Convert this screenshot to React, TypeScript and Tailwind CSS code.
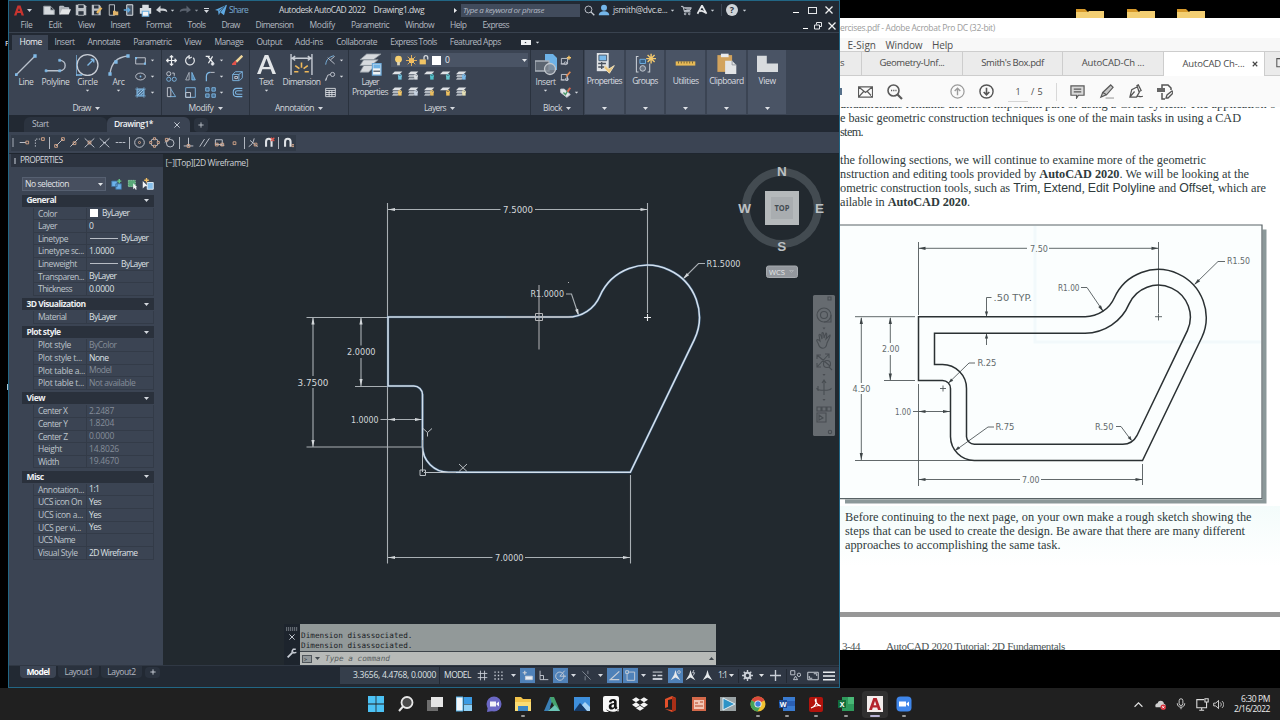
/**
 * CAD workstation desktop
 *
 * A dark CAD window on the left, a PDF reader with the exercise sheet
 * on the right and the system taskbar along the bottom.
 */

import { useLayoutEffect, useRef, useState, type ReactNode } from 'react'
import { FaDropbox, FaAmazon } from 'react-icons/fa'

/**
 * Utility function for conditional CSS classes
 */
function classNames(...classes: (string | false | undefined)[]) {
  return classes.filter(Boolean).join(' ')
}

/**
 * Single line of text tracked so that it fills exactly `w` pixels
 */
function Fit({ w, className, children }: { w: number; className?: string; children: ReactNode }) {
  const ref = useRef<HTMLSpanElement>(null)
  const [spacing, setSpacing] = useState(0)

  useLayoutEffect(() => {
    const el = ref.current
    if (!el) return
    const count = el.textContent?.length || 1
    setSpacing((w - el.getBoundingClientRect().width) / count)
  }, [w])

  return (
    <span className={classNames('block shrink-0 whitespace-nowrap', className)} style={{ width: w }}>
      <span ref={ref} className="inline-block whitespace-nowrap" style={{ letterSpacing: spacing }}>
        {children}
      </span>
    </span>
  )
}

/**
 * Small inline icon on a 16 unit grid
 */
function Icon({ size = 12, box = '0 0 16 16', className, children }: { size?: number; box?: string; className?: string; children: ReactNode }) {
  return (
    <svg width={size} height={size} viewBox={box} fill="none" stroke="#c9ced6" strokeWidth="1.3" className={classNames('block shrink-0', className)} aria-hidden="true">
      {children}
    </svg>
  )
}

function Caret({ className }: { className?: string }) {
  return (
    <svg width="5" height="3" viewBox="0 0 10 6" className={classNames('block shrink-0', className || 'text-[#d5d9df]')} aria-hidden="true">
      <path d="M0 0H10L5 6Z" fill="currentColor" />
    </svg>
  )
}

const BLUE = '#7fb9e6'

/* ------------------------------------------------------------------ */
/* Title bar and menus                                                 */
/* ------------------------------------------------------------------ */

function TitleBar() {
  return (
    <div className="flex h-[18px] shrink-0 items-center">
      <svg width="10" height="11" viewBox="0 0 20 22" className="ml-[5px] block shrink-0" aria-hidden="true">
        <path d="M7 1h6l7 20h-5l-1.500-5H6.500L5 21H0ZM10 6l-2 6h4Z" fill="#c8342f" fillRule="evenodd" />
      </svg>
      <Caret className="ml-[3px] text-[#c9ced6]" />
      <Icon className="ml-[11px]"><path d="M1 3h9l5 5v6H1Z M10 3v5h5" fill="#d6dade" stroke="#9aa0a8" /></Icon>
      <Icon className="ml-1"><path d="M1 14V3h5l2 2h5v3" fill="#a9adb2" /><path d="M1 14l3-7h12l-3 7Z" fill="#e3e5e7" stroke="none" /></Icon>
      <Icon className="ml-1"><path d="M1 1h12l2 2v12H1Z" fill="#b9bec4" stroke="none" /><path d="M4 1h8v5H4ZM4 9h8v6H4Z" fill="#2c3440" stroke="#e9ebed" strokeWidth=".8" /></Icon>
      <Icon className="ml-1"><path d="M1 1h10l2 2v12H1Z" fill="#b9bec4" stroke="none" /><path d="M4 2h6v4H4ZM4 9h6v5H4Z" fill="#2c3440" stroke="none" /><path d="M8 12l6-7" stroke="#e9b860" strokeWidth="3" /></Icon>
      <Icon className="ml-1"><path d="M3 1h7v14H3Z" stroke="#b9bec4" /><path d="M8 9h3l1 1h3v5H8Z" fill="#e0b46a" stroke="none" /></Icon>
      <Icon className="ml-1"><path d="M5 1h8v14H5Z" stroke="#dfe2e5" fill="#4c5968" /><path d="M1 8h8M6 5l3 3-3 3" stroke="#5fa8dd" strokeWidth="1.800" /></Icon>
      <Icon className="ml-1" size={13}><path d="M4 1h8v4H4ZM1 5h14v7H1Z" fill="#d9dde1" stroke="none" /><path d="M4 9h8v6H4Z" fill="#f4f5f6" stroke="#67aee0" /></Icon>
      <Icon className="ml-[4px]"><path d="M15 11c0-5-4-5-9-5V2L0 8l6 4V9c5 0 7 0 9 2Z" fill="#cfd3d8" stroke="none" /></Icon>
      <Caret className="ml-[2px] scale-75 text-[#c9ced6]" />
      <Icon className="ml-[4px]"><path d="M1 11c0-5 4-5 9-5V2l6 6-6 4V9c-5 0-7 0-9 2Z" fill="#59616d" stroke="none" /></Icon>
      <Caret className="ml-[3px] scale-75 text-[#8a919b]" />
      <span className="ml-[5px] flex shrink-0 flex-col items-center gap-px"><span className="h-px w-[5px] bg-[#d5d9df]" /><Caret /></span>
      <Icon className="ml-[6px]"><path d="M0 8L16 1l-4 14-5-4-2 4-1-6Z" fill="#5fa9e2" stroke="none" /><path d="M5 9l8-6-6 8" stroke="#222933" strokeWidth=".8" /></Icon>
      <Fit w={19} className="ml-[2px] text-[#79a9cf]">Share</Fit>
      <Fit w={86.5} className="ml-[31px] text-[#d6d9dd]">Autodesk AutoCAD 2022</Fit>
      <Fit w={50.5} className="ml-2 text-[#d6d9dd]">Drawing1.dwg</Fit>
      <svg width="3" height="5" viewBox="0 0 3 5" className="ml-[30px] block shrink-0"><path d="M0 0L3 2.500 0 5Z" fill="#e8eaed" /></svg>
      <div className="ml-[4px] flex h-[13px] w-[119px] shrink-0 items-center bg-[#414b5c] pl-[2px]">
        <Fit w={81} className="text-[8px] italic text-[#b4bac4]">Type a keyword or phrase</Fit>
      </div>
      <Icon className="ml-[4px]" size={11}><circle cx="6.500" cy="6.500" r="5" /><path d="M10 10l5 5" strokeWidth="2" /></Icon>
      <Icon className="ml-[3px]"><circle cx="8" cy="5" r="4" fill="#74b6ea" stroke="none" /><path d="M1 15c0-7 14-7 14 0Z" fill="#74b6ea" stroke="none" /></Icon>
      <Fit w={54.5} className="ml-[3px] text-[#d6d9dd]">jsmith@dvc.e...</Fit>
      <Caret className="ml-[2px] scale-75 text-[#c9ced6]" />
      <Icon className="ml-[6.500px]" size={11}><path d="M0 2h3l2 8h9M4 4h11l-2 4H5" fill="#8f959d" /><circle cx="6" cy="13" r="1.200" /><circle cx="12" cy="13" r="1.200" /></Icon>
      <Icon className="ml-[4px]"><path d="M8 2L2 13M8 2l6 11M5 10c3-3 6 2 9 2" strokeWidth="2.200" stroke="#e5e7ea" /></Icon>
      <Caret className="ml-[2px] scale-75 text-[#c9ced6]" />
      <span className="ml-[6px] h-[12px] w-px shrink-0 bg-[#3b4450]" />
      <span className="ml-[4px] flex size-[12px] shrink-0 items-center justify-center rounded-full bg-[#d0d4d8] text-[9px] font-bold text-[#2b323c]">?</span>
      <Caret className="ml-[4px] scale-75 text-[#c9ced6]" />
      <span className="ml-[46px] mt-[5px] h-px w-[6px] shrink-0 bg-white" />
      <span className="ml-[9px] h-[7px] w-[9px] shrink-0 border border-[#e5e7ea]" />
      <Icon className="ml-[8px]" size={8}><path d="M1 1l14 14M15 1L1 15" strokeWidth="2.500" stroke="#f2f3f4" /></Icon>
    </div>
  )
}

const menus: [string, number][] = [
  ['File', 12], ['Edit', 13.5], ['View', 16.5], ['Insert', 19.5], ['Format', 25.5], ['Tools', 18], ['Draw', 18],
  ['Dimension', 38], ['Modify', 25.5], ['Parametric', 38], ['Window', 29], ['Help', 16.5], ['Express', 26.5],
]

const ribbonTabs: [string, number][] = [
  ['Insert', 20], ['Annotate', 32.5], ['Parametric', 38], ['View', 17], ['Manage', 29], ['Output', 25.500],
  ['Add-ins', 28], ['Collaborate', 41], ['Express Tools', 46.5], ['Featured Apps', 51],
]

function MenuBar() {
  return (
    <div className="flex h-[14px] shrink-0 items-center gap-4 border-b border-[#39424f] pl-[11.500px] text-[#b4b9c1]">
      {menus.map(([name, w]) => (
        <Fit key={name} w={w}>{name}</Fit>
      ))}
      <div className="ml-auto flex items-center gap-[6px] pr-[3px]">
        <span className="mt-[5px] h-px w-[5px] bg-white" />
        <Icon size={8}><path d="M5 5V1h10v8h-4M1 6h10v8H1Z" strokeWidth="2" stroke="#e5e7ea" /></Icon>
        <Icon size={8}><path d="M1 1l14 14M15 1L1 15" strokeWidth="2.500" stroke="#f2f3f4" /></Icon>
      </div>
    </div>
  )
}

function RibbonTabs() {
  return (
    <div className="flex h-[17px] shrink-0 items-end text-[#b4b9c1]">
      <div className="ml-[3px] flex h-[15px] w-[36px] shrink-0 items-center bg-[#3b4453] pl-[7.500px] text-[#f0f2f4]">
        <Fit w={22.5}>Home</Fit>
      </div>
      <div className="ml-[6.500px] flex h-[15px] items-center gap-[13.100px]">
        {ribbonTabs.map(([name, w]) => (
          <Fit key={name} w={w}>{name}</Fit>
        ))}
        <div className="ml-[7px] flex items-center gap-[4px]">
          <span className="flex h-[5px] w-[10px] items-center justify-center bg-[#eef0f2]"><Caret className="rotate-180 scale-50 text-[#222933]" /></span>
          <Caret className="scale-75 text-[#d5d9df]" />
        </div>
      </div>
    </div>
  )
}

/* ------------------------------------------------------------------ */
/* Ribbon                                                              */
/* ------------------------------------------------------------------ */

function BigButton({ label, w, cell, caret, children }: { label: string; w: number; cell: string; caret?: boolean; children: ReactNode }) {
  return (
    <div className={classNames('flex shrink-0 flex-col items-center', cell)}>
      <div className="mt-[3px] flex h-[23px] items-center">{children}</div>
      <Fit w={w} className="h-[12px] leading-[12px] text-[#d3d7dc]">{label}</Fit>
      {caret && <Caret className="mt-px scale-75 text-[#d5d9df]" />}
    </div>
  )
}

function Panel({ title, w, cell, children }: { title: string; w: number; cell: string; children: ReactNode }) {
  return (
    <div className={classNames('flex shrink-0 flex-col border-r border-[#2a323e]', cell)}>
      <div className="flex h-[51px]">{children}</div>
      <div className="flex h-[14px] items-center justify-center gap-[4px] text-[#d3d7dc]">
        <Fit w={w}>{title}</Fit>
        <Caret />
      </div>
    </div>
  )
}

const drawTools: ReactNode[] = [
  <><path d="M1 4h14v9H1Z" /><path d="M0 3h3v3H0ZM13 11h3v3h-3Z" fill={BLUE} stroke="none" /></>,
  <><ellipse cx="8" cy="8" rx="7" ry="5" /><circle cx="8" cy="8" r="1.300" fill={BLUE} stroke="none" /></>,
  <><path d="M3 3h10v10H3Z" stroke={BLUE} fill="#4d7599" /><path d="M3 0v16M13 0v16M0 3h16M0 13h16" stroke={BLUE} strokeWidth=".8" /><path d="M4 8l4-4M4 12l8-8M8 12l4-4" stroke="#a5cdea" /></>,
]

const modifyTools: ReactNode[][] = [
  [
    <path d="M8 1v14M1 8h14M5.500 3.500L8 1l2.500 2.500M5.500 12.500L8 15l2.500-2.500M3.500 5.500L1 8l2.500 2.500M12.500 5.500L15 8l-2.500 2.500" stroke="#eceef0" strokeWidth="1.700" />,
    <path d="M6 2a6.300 6.300 0 1 0 6 2M6 0l0 5 4-2" stroke="#dfe2e6" strokeWidth="1.800" />,
    <><path d="M1 2h6M4 2l5 6 4 5M11 2L5 12" stroke="#eceef0" strokeWidth="1.800" /><circle cx="11" cy="13" r="2" fill="#eceef0" /></>,
    <><path d="M15 1L6 10" stroke="#f0d79b" strokeWidth="3.500" /><path d="M6 9l-4 4h4" stroke="#e0524a" strokeWidth="3" /></>,
  ],
  [
    <><circle cx="4" cy="4" r="3" /><circle cx="4" cy="12" r="3" stroke={BLUE} /><circle cx="12" cy="12" r="3" stroke={BLUE} /><path d="M9 3h3v4" /></>,
    <><path d="M6 2v11H1Z" stroke="#aeb6c0" /><path d="M10 2v11h5Z" stroke={BLUE} fill="#4f86b0" /></>,
    <><path d="M2 15V8c0-4 2-6 6-6" stroke={BLUE} strokeWidth="1.800" /><path d="M8 2h6" /></>,
    <><path d="M1 5h9v9H1ZM5 1h10v9l-4 4M1 5l4-4M10 5l5-4" stroke={BLUE} /><path d="M4 8h4v3H4Z" /></>,
  ],
  [
    <><path d="M2 1h5v13H2Z" /><path d="M7 3l7 11H6" stroke={BLUE} /></>,
    <><path d="M1 1h14v14H1Z" stroke={BLUE} /><path d="M1 8h7v7H1Z" /></>,
    <><path d="M1 1h5v5H1ZM10 1h5v5h-5ZM1 10h5v5H1ZM10 10h5v5h-5Z" stroke={BLUE} fill="#456a8c" /></>,
    <><path d="M15 2H7C0 2 0 14 7 14h8M15 5.500H8c-4 0-4 5 0 5h7" stroke={BLUE} strokeWidth="1.500" /></>,
  ],
]

const annotationTools: ReactNode[] = [
  <><path d="M1 14C2 6 6 3 13 1" stroke={BLUE} /><path d="M4 4l10 9M14 2L8 7" /></>,
  <><circle cx="11" cy="5" r="3" /><path d="M1 14l3-8 4-1M1 14l1-4" /></>,
  <><path d="M1 2h14v12H1ZM1 5h14M1 8h14M1 11h14M6 5v9M10 5v9" stroke="#dadde2" /></>,
]

const blockTools: ReactNode[] = [
  <><path d="M2 5h9v8H2ZM1 13h5" /><circle cx="8" cy="12" r="2" /><path d="M13 1v6M10 4h6" stroke="#f1c26a" strokeWidth="2" /></>,
  <><path d="M2 5h9v8H2ZM1 13h5" /><circle cx="10" cy="12" r="2" /><path d="M15 1L9 8" stroke="#e58a52" strokeWidth="2.500" /></>,
  <><path d="M1 3h5l9 8-5 4-9-7Z" fill="#e3e5e8" /><path d="M5 8l3 3 5-9" stroke="#4c9a6a" strokeWidth="2" /><path d="M15 1l-4 6" stroke="#e0644d" strokeWidth="2.500" /></>,
]

// Stack-of-sheets glyph with a coloured badge, reused for all layer tools
function LayerGlyph({ badge, stack }: { badge: string; stack?: boolean }) {
  return (
    <>
      <path d="M4 2h11l-4 4H0Z" fill="#dfe2e6" stroke="none" />
      {stack && <path d="M2 7h11l-3 3H0ZM2 11h9l-3 3H0Z" fill="#b3b9c1" stroke="none" />}
      <path d="M9 8h5v6H9Z" fill={badge} stroke="none" />
      <circle cx="11.500" cy="8.500" r="2.300" stroke={badge} />
    </>
  )
}

const layerRows: { badge: string; stack?: boolean }[][] = [
  [{ badge: '#6fc3de' }, { badge: '#d9dde1', stack: true }, { badge: '#4fc0c9' }, { badge: '#65c4cc' }, { badge: '#79b9e8', stack: true }],
  [{ badge: '#f2c665', stack: true }, { badge: '#c8d4e3', stack: true }, { badge: '#e9bd61', stack: true }, { badge: '#efc15f' }, { badge: '#e5dfb5', stack: true }],
]

const collapsedPanels: { name: string; w: number; icon: ReactNode }[] = [
  {
    name: 'Properties', w: 35,
    icon: <><path d="M4 0h17v26H4Z" fill="#dfe2e5" stroke="none" /><path d="M7 3h11v8H7Z" fill="#79b9ea" stroke="#46566a" /><path d="M6 15h11M6 20h9M11 13v10" stroke="#48505c" strokeWidth="1.800" /><path d="M16 18l5 5 8-5-7 11-7-7Z" fill="#e9c478" stroke="#f3e3bd" /></>,
  },
  {
    name: 'Groups', w: 25.5,
    icon: <><path d="M5 5H2v22h3M19 5M18 27h3V15" stroke="#c8cdd4" strokeWidth="1.500" /><path d="M7 9h8v6H7Z" stroke="#6fb1e5" fill="#385f83" /><circle cx="11" cy="22" r="4" fill="#697382" /><path d="M23 1v14M16 8h14M18 3l10 10M28 3L18 13" stroke="#f3c96e" strokeWidth="2" /></>,
  },
  {
    name: 'Utilities', w: 26,
    icon: <><path d="M1 12h28v6H1Z" fill="#e8ba55" stroke="none" /><path d="M5 12v3M9 12v3M13 12v3M17 12v3M21 12v3M25 12v3" stroke="#6b5a32" /></>,
  },
  {
    name: 'Clipboard', w: 34.5,
    icon: <><path d="M2 3h21v24H2Z" fill="#d2a35d" stroke="none" /><path d="M7 1h11v5H7Z" fill="#e9ebed" stroke="none" /><path d="M13 11h10l6 6v13H13Z" fill="#e3e5e7" stroke="none" /><path d="M23 11v6h6" stroke="#8d939b" /></>,
  },
  {
    name: 'View', w: 17,
    icon: <path d="M0 4h14v11h16v12H0Z" fill="#d8dbde" stroke="none" />,
  },
]

function Ribbon() {
  return (
    <div className="flex h-[65px] shrink-0 bg-[#3b4453] pl-[2px]">
      <Panel title="Draw" w={18} cell="w-[151px]">
        <BigButton label="Line" w={15} cell="w-[30px]">
          <Icon size={22} box="0 0 22 22"><path d="M1 21L20 2" stroke="#b9c1cc" /><path d="M0 20h2v2H0ZM19 1h2v2h-2Z" fill={BLUE} stroke={BLUE} /></Icon>
        </BigButton>
        <BigButton label="Polyline" w={28} cell="w-[29px]">
          <Icon size={23} box="0 0 22 22"><path d="M2 17H15c7 0 7-10 0-10" stroke="#b9c1cc" /><path d="M1 16h2v2H1ZM14 16h2v2h-2ZM14 6h2v2h-2Z" fill={BLUE} stroke={BLUE} strokeWidth=".6" /></Icon>
        </BigButton>
        <BigButton label="Circle" w={20.5} cell="w-[35px]" caret>
          <Icon size={23} box="0 0 22 22"><circle cx="11" cy="11.500" r="10" stroke="#c9ced6" /><path d="M11 12l6-6M17 6h-3M17 6v3M0 2v20M0 21h6" stroke={BLUE} /></Icon>
        </BigButton>
        <BigButton label="Arc" w={12} cell="w-[27px]" caret>
          <Icon size={22} box="0 0 22 22"><path d="M2 20C3 10 9 3 20 2" stroke="#b9c1cc" /><path d="M1 19h2v2H1ZM7 7h2v2H7ZM19 1h2v2h-2Z" fill={BLUE} stroke={BLUE} /></Icon>
        </BigButton>
        <div className="flex flex-col pl-[3px] pt-[2px]">
          {drawTools.map((tool, i) => (
            <div key={i} className="flex h-4 items-center gap-[4px]"><Icon size={11}>{tool}</Icon><Caret className="scale-75 text-[#d5d9df]" /></div>
          ))}
        </div>
      </Panel>

      <Panel title="Modify" w={25} cell="w-[88px]">
        <div className="flex flex-col pl-[4px] pt-[2px]">
          {modifyTools.map((row, r) => (
            <div key={r} className="flex h-4 items-center">
              <Icon size={11}>{row[0]}</Icon>
              <Icon size={11} className="ml-2">{row[1]}</Icon>
              <Icon size={11} className="ml-[9px]">{row[2]}</Icon>
              <Caret className="ml-[3px] scale-75 text-[#d5d9df]" />
              <Icon size={11} className="ml-2">{row[3]}</Icon>
            </div>
          ))}
        </div>
      </Panel>

      <Panel title="Annotation" w={39} cell="w-[99px]">
        <BigButton label="Text" w={14} cell="w-[32px]" caret>
          <Icon size={19}><path d="M0 16L6.500 0h3L16 16h-3l-1.500-4h-7L3 16ZM8 3l-2.700 7h5.400Z" fill="#e2e5e8" stroke="none" fillRule="evenodd" /></Icon>
        </BigButton>
        <BigButton label="Dimension" w={38} cell="w-[39px]">
          <Icon size={23} box="0 0 22 22"><path d="M1 1v20M21 1v20M2 5h18M5 3L2 5l3 2M17 3l3 2-3 2" stroke="#c9ced6" /><path d="M11 9v5M5 12l4 3M17 12l-4 3M4 18h4M18 18h-4" stroke="#f0b95a" strokeWidth="1.500" /></Icon>
        </BigButton>
        <div className="flex flex-col pl-[4px] pt-[2px]">
          {annotationTools.map((tool, i) => (
            <div key={i} className="flex h-4 items-center gap-[3px]"><Icon size={11}>{tool}</Icon>{i < 2 && <Caret className="scale-75 text-[#d5d9df]" />}</div>
          ))}
        </div>
      </Panel>

      <Panel title="Layers" w={22} cell="w-[182px]">
        <div className="flex w-[42px] shrink-0 flex-col items-center leading-[10px] text-[#d3d7dc]">
          <Icon size={23} box="0 0 24 24" className="mt-[3px]"><path d="M8 1h15l-8 6H1ZM5 7h15l-7 6H1ZM5 13h12l-7 7H1Z" fill="#d7dade" stroke="#8b929c" strokeWidth=".8" /><path d="M14 11h9v12h-9Z" fill="#f1f3f5" stroke="#6da9d9" /><path d="M15 12h7v4h-7Z" fill="#6fb2e5" stroke="none" /><path d="M15 19h7" stroke="#4b5563" /></Icon>
          <Fit w={17} className="mt-[1px]">Layer</Fit>
          <Fit w={36}>Properties</Fit>
        </div>
        <div className="flex flex-col pt-[3px]">
          <div className="flex h-[14px] w-[137px] items-center bg-[#4a5465] pl-[2px] text-[#e4e7ea]">
            <Icon size={11}><circle cx="8" cy="6" r="5" fill="#f6cf70" stroke="none" /><path d="M6 10h4v5H6Z" fill="#dcd5bb" stroke="none" /></Icon>
            <Icon size={11} className="ml-[2px]"><circle cx="8" cy="8" r="3.800" fill="#f6cf70" stroke="none" /><path d="M8 0v16M0 8h16M2.500 2.500l11 11M13.500 2.500l-11 11" stroke="#f0b85b" /></Icon>
            <Icon size={10} className="ml-[2px]"><path d="M1 7h10v8H1Z" fill="#f0c465" stroke="none" /><path d="M8 7V4c0-4 6-4 6 0v3" stroke="#d9dde1" strokeWidth="2" /></Icon>
            <span className="ml-[3px] size-[9px] bg-white" />
            <span className="ml-1">0</span>
            <Caret className="ml-auto mr-[1px]" />
          </div>
          {layerRows.map((row, r) => (
            <div key={r} className="flex h-4 items-center gap-[5px] pl-px">
              {row.map((item, i) => (
                <Icon key={i} size={11}><LayerGlyph {...item} /></Icon>
              ))}
            </div>
          ))}
        </div>
      </Panel>

      <Panel title="Block" w={19} cell="w-[53px]">
        <BigButton label="Insert" w={20} cell="w-[29px]" caret>
          <Icon size={22} box="0 0 22 22"><path d="M10 0h8l4 4v12H10Z" fill="#6db2e8" stroke="none" /><path d="M0 7h14v10H0Z" fill="#5c6571" stroke="#aab1ba" /><circle cx="15" cy="15" r="5.500" fill="#7f8893" stroke="#c2c7cd" fillOpacity=".8" /></Icon>
        </BigButton>
        <div className="flex flex-col pt-[2px]">
          {blockTools.map((tool, i) => (
            <div key={i} className="flex h-4 items-center gap-[3px]"><Icon size={11}>{tool}</Icon>{i === 2 && <Caret className="scale-75 text-[#d5d9df]" />}</div>
          ))}
        </div>
      </Panel>

      <div className="ml-px flex gap-[2px]">
        {collapsedPanels.map((panel) => (
          <div key={panel.name} className="flex h-[64px] w-[38.700px] flex-col items-center bg-[#4a5465]">
            <Icon size={21} box="0 0 30 30" className="mt-[3px]">{panel.icon}</Icon>
            <Fit w={panel.w} className="mt-[1px] leading-[12px] text-[#d9dce0]">{panel.name}</Fit>
            <Caret className="mb-[4px] mt-auto text-[#e1e4e8]" />
          </div>
        ))}
      </div>
    </div>
  )
}

/* ------------------------------------------------------------------ */
/* Document tabs and object snap toolbar                               */
/* ------------------------------------------------------------------ */

function DocumentTabs() {
  return (
    <div className="flex h-[17px] shrink-0 items-end pl-[15px]">
      <div className="flex h-[15px] w-[83px] items-center rounded-t-md bg-[#2b333f] pl-[8px] text-[#b9bec6]">
        <Fit w={16.5}>Start</Fit>
      </div>
      <div className="flex h-[15px] w-[83px] items-center rounded-t-md bg-[#3b4453] pl-[7px] text-[#f1f3f5]">
        <Fit w={39} className="font-semibold">Drawing1*</Fit>
        <Icon size={6} className="ml-[21px]"><path d="M1 1l14 14M15 1L1 15" strokeWidth="2.500" /></Icon>
      </div>
      <div className="ml-[4px] flex h-[14px] w-[14px] items-center justify-center rounded bg-[#2b333f]">
        <Icon size={6}><path d="M8 1v14M1 8h14" strokeWidth="2.200" /></Icon>
      </div>
    </div>
  )
}

const SNAP = '#d9a98b'

const snapGroups: ReactNode[][] = [
  [
    <><path d="M1 8h9" /><path d="M10 6h4v4h-4Z" stroke={SNAP} /></>,
    <><path d="M2 14V3h8" strokeDasharray="2 2" /><path d="M11 1h4v4h-4Z" stroke={SNAP} /></>,
  ],
  [
    <><path d="M3 13L13 3" /><path d="M1 11h4v4H1ZM11 1h4v4h-4Z" stroke={SNAP} /></>,
    <><path d="M2 14L14 2" /><path d="M6 7h4v4H6Z" stroke={SNAP} /></>,
    <><path d="M1 2l14 13M15 2L1 15" /><path d="M6 6h4v4H6Z" stroke={SNAP} /></>,
    <><path d="M1 2l14 13M15 2L1 15M6 8h4" /></>,
    <path d="M1 8h14" strokeDasharray="4 1" />,
  ],
  [
    <><circle cx="8" cy="8" r="7" /><circle cx="8" cy="8" r="1.500" stroke={SNAP} /></>,
    <><circle cx="8" cy="8" r="5.500" /><path d="M6.500 1h3v3h-3ZM6.500 12h3v3h-3ZM1 6.500h3v3H1ZM12 6.500h3v3h-3Z" stroke={SNAP} fill="#3b4453" /></>,
    <><circle cx="9" cy="9" r="5.500" /><path d="M1 8L9 1" /><path d="M2 2h4v4H2Z" stroke={SNAP} /></>,
  ],
  [
    <><path d="M8 1v12M1 13h14" /><path d="M6 11h4v4H6Z" stroke={SNAP} /></>,
    <path d="M1 14L8 3M7 14l8-12" />,
    <><path d="M2 4h10v7H2ZM9 12h6" /><path d="M2 9h4v4H2ZM10 9h4v4h-4Z" stroke={SNAP} /></>,
    <path d="M6 7h4v4H6Z" stroke={SNAP} />,
  ],
  [
    <><path d="M1 14C5 12 8 8 9 2M3 5l11 9" /><path d="M9 9h4v4H9Z" stroke={SNAP} /></>,
    <><path d="M3 14V7c0-6 8-6 8 0v7" stroke="#e0e3e7" strokeWidth="3" /><path d="M10 1l5 5M15 1l-5 5" stroke="#e25a50" strokeWidth="2" /></>,
  ],
  [<><path d="M3 14V7c0-6 8-6 8 0v7" stroke="#e0e3e7" strokeWidth="3" /><path d="M13 11h3v3h-3Z" stroke={SNAP} /></>],
]

function SnapToolbar() {
  return (
    <div className="flex h-[22px] shrink-0 items-center border-b border-[#1f262f] bg-[#3b4453] pl-[2px]">
      <div className="flex h-[16px] items-center bg-[#323b48] pl-[1px]">
        <span className="mr-[3px] h-[9px] w-[2px] bg-[#6c7480]" />
        {snapGroups.map((group, g) => (
          <div key={g} className="flex items-center">
            {g > 0 && <span className="mx-[1.400px] h-[12px] w-px bg-[#b0b6bf]" />}
            {group.map((tool, i) => (
              <span key={i} className="flex w-[15.300px] justify-center"><Icon size={11}>{tool}</Icon></span>
            ))}
          </div>
        ))}
      </div>
    </div>
  )
}

/* ------------------------------------------------------------------ */
/* Properties palette                                                  */
/* ------------------------------------------------------------------ */

interface PropertyRow {
  label: string
  lw: number
  value: string
  vw: number
  muted?: boolean
  mark?: 'swatch' | 'line'
}

interface PropertySection {
  title: string
  w: number
  rows: PropertyRow[]
}

const sections: PropertySection[] = [
  {
    title: 'General', w: 29.5,
    rows: [
      { label: 'Color', lw: 19, value: 'ByLayer', vw: 27.5, mark: 'swatch' },
      { label: 'Layer', lw: 19, value: '0', vw: 4.5 },
      { label: 'Linetype', lw: 30, value: 'ByLayer', vw: 27.5, mark: 'line' },
      { label: 'Linetype sc...', lw: 46, value: '1.0000', vw: 25 },
      { label: 'Lineweight', lw: 39, value: 'ByLayer', vw: 27.5, mark: 'line' },
      { label: 'Transparen...', lw: 46, value: 'ByLayer', vw: 27.5 },
      { label: 'Thickness', lw: 34, value: '0.0000', vw: 25 },
    ],
  },
  { title: '3D Visualization', w: 59, rows: [{ label: 'Material', lw: 28.5, value: 'ByLayer', vw: 27.5 }] },
  {
    title: 'Plot style', w: 34,
    rows: [
      { label: 'Plot style', lw: 33, value: 'ByColor', vw: 27.5, muted: true },
      { label: 'Plot style t...', lw: 44, value: 'None', vw: 19.5 },
      { label: 'Plot table a...', lw: 47, value: 'Model', vw: 22.5, muted: true },
      { label: 'Plot table t...', lw: 46, value: 'Not available', vw: 46.5, muted: true },
    ],
  },
  {
    title: 'View', w: 18.5,
    rows: [
      { label: 'Center X', lw: 29.5, value: '2.2487', vw: 25, muted: true },
      { label: 'Center Y', lw: 29.5, value: '1.8204', vw: 25, muted: true },
      { label: 'Center Z', lw: 29.5, value: '0.0000', vw: 25, muted: true },
      { label: 'Height', lw: 24, value: '14.8026', vw: 30, muted: true },
      { label: 'Width', lw: 21, value: '19.4670', vw: 30, muted: true },
    ],
  },
  {
    title: 'Misc', w: 17,
    rows: [
      { label: 'Annotation...', lw: 46, value: '1:1', vw: 10.5 },
      { label: 'UCS icon On', lw: 44, value: 'Yes', vw: 12 },
      { label: 'UCS icon a...', lw: 45, value: 'Yes', vw: 12 },
      { label: 'UCS per vi...', lw: 43, value: 'Yes', vw: 12 },
      { label: 'UCS Name', lw: 37, value: '', vw: 0 },
      { label: 'Visual Style', lw: 39.5, value: '2D Wireframe', vw: 48.5 },
    ],
  },
]

function PropertiesPalette() {
  return (
    <div className="flex w-[154px] shrink-0 flex-col bg-[#3b4453] pl-[2px] leading-none">
      <div className="flex h-[13px] items-center bg-[#2c333f] pl-[3px]">
        <span className="h-[6px] w-[2px] bg-[#7b828d]" />
        <Fit w={42.5} className="ml-[4px] text-[#d6d9de]">PROPERTIES</Fit>
      </div>
      <div className="mt-[10px] flex h-[14px] items-center pl-[11px]">
        <div className="flex h-[14px] w-[84px] items-center border border-[#566071] bg-[#474f5f] pl-[2px] text-[#e2e5e9]">
          <Fit w={44}>No selection</Fit>
          <Caret className="ml-auto mr-[2px]" />
        </div>
        <Icon size={11} className="ml-[5px]"><path d="M1 3h8v8H1ZM7 7h8v8H7Z" fill="#6cb2ea" stroke="#3f6f9c" /><path d="M12 0v6M9 3h6" stroke="#6bc98a" strokeWidth="2" /></Icon>
        <Icon size={11} className="ml-[5px]"><path d="M2 2h10v9H2Z" fill="#58a878" stroke="#8ed0a4" strokeDasharray="2 1" /><path d="M9 6v9l2-2 2 3 1-1-1-3h2Z" fill="#f2f3f4" stroke="none" /></Icon>
        <Icon size={12} className="ml-[4px]"><path d="M7 6h8v9H7Z" fill="#86bfea" stroke="#dce9f4" /><path d="M1 4v10l3-3h4Z" fill="#f2f3f4" stroke="none" /><path d="M6 0v6M3 3h6" stroke="#f0bd63" strokeWidth="1.800" /></Icon>
      </div>
      <div className="mt-[3.500px] pl-[11px]">
        {sections.map((section) => (
          <div key={section.title} className="mb-[2.350px] w-[132px]">
            <div className="flex h-[13px] items-center justify-between border-b border-[#3b4453] bg-[#2a313c] pl-[4.500px] pr-[5px]">
              <Fit w={section.w} className="font-bold text-[#eceef0]">{section.title}</Fit>
              <Caret />
            </div>
            <div className="ml-[11px] border-l border-[#333b48]">
              {section.rows.map((row) => (
                <div key={row.label} className="flex h-[12.650px] border-b border-r border-[#333b48]">
                  <div className="flex w-[53px] items-center border-r border-[#333b48] pl-[4px] pt-px text-[#bfc4cc]">
                    <Fit w={row.lw}>{row.label}</Fit>
                  </div>
                  <div className={classNames('flex flex-1 items-center pl-[2px]', row.muted ? 'text-[#858d99]' : 'text-[#dde0e4]')}>
                    {row.mark === 'swatch' && <span className="ml-px mr-[4px] size-[8px] bg-white" />}
                    {row.mark === 'line' && <span className="ml-[1px] mr-[3px] h-px w-[28px] bg-[#b8bdc5]" />}
                    {row.value && <Fit w={row.vw}>{row.value}</Fit>}
                  </div>
                </div>
              ))}
            </div>
          </div>
        ))}
      </div>
    </div>
  )
}

/* ------------------------------------------------------------------ */
/* Drawing helpers                                                     */
/* ------------------------------------------------------------------ */

const ROTATION = { right: 0, down: 90, left: 180, up: 270 }

function Arrow({ x, y, dir, angle, size = 7 }: { x: number; y: number; dir?: keyof typeof ROTATION; angle?: number; size?: number }) {
  const turn = dir ? ROTATION[dir] : angle
  return <path d={`M0 0L${-size} -1.600V1.600Z`} transform={`translate(${x} ${y}) rotate(${turn})`} fill="currentColor" stroke="none" />
}

function DimText({ x, y, w, size = 9.2, children }: { x: number; y: number; w: number; size?: number; children: string }) {
  return (
    <text x={x} y={y} textLength={w} lengthAdjust="spacingAndGlyphs" fontSize={size} fill="currentColor" stroke="none" className="font-['DejaVu_Sans',sans-serif]">
      {children}
    </text>
  )
}

const PART_OUTLINE =
  'M388 317H568.100A34.600 34.600 0 0 0 599.800 296.200A52 52 0 1 1 694.300 339.600L630.300 472.300H448.500A26 26 0 0 1 422.500 446.500V394.600A8.700 8.700 0 0 0 413.900 386H388Z'

function ModelSpace() {
  return (
    <svg viewBox="163 154 676 511" width="676" height="511" fill="none" className="block text-[#d3d7da]" aria-label="Model space">
      <text x="165.500" y="165.500" textLength="83" fontSize="8.500" fill="#cdd1d6">[−][Top][2D Wireframe]</text>

      {/* dimension and extension lines */}
      <g stroke="#a9afb4" strokeWidth="1.100">
        <path d="M387.500 203V317M387.500 386V563.500M647.500 203V313M388 209.500H500.500M535 209.500H647" />
        <path d="M306.500 317.500H388M355 386.500H388M306.500 447H422" />
        <path d="M313 318V376M313 388V447M361 318V345.500M361 358V386" />
        <path d="M380.500 419.500H422M388 557.500H492.500M525 557.500H630M630.500 475V563.500" />
        <path d="M684 278L698.500 263.500H705M578.500 315L571.500 294H566" />
        <path d="M644 317.500h7M647.500 314v7" stroke="#e8eaec" />
      </g>
      <Arrow x={388} y={209.5} dir="left" />
      <Arrow x={647.5} y={209.5} dir="right" />
      <Arrow x={313} y={317.5} dir="up" />
      <Arrow x={313} y={447} dir="down" />
      <Arrow x={361} y={317.5} dir="up" />
      <Arrow x={361} y={386} dir="down" />
      <Arrow x={388} y={419.5} dir="left" />
      <Arrow x={422} y={419.5} dir="right" />
      <Arrow x={388} y={557.5} dir="left" />
      <Arrow x={630} y={557.5} dir="right" />
      <Arrow x={683} y={279} angle={135} />
      <Arrow x={578.8} y={316} angle={72} />

      {/* part outline */}
      <path d={PART_OUTLINE} stroke="#3f6f9f" strokeWidth="2.600" strokeOpacity=".5" />
      <path d={PART_OUTLINE} stroke="#d3dfec" strokeWidth="1.600" />

      <DimText x={503} y={212.800} w={30}>7.5000</DimText>
      <DimText x={530.5} y={297.200} w={33.500}>R1.0000</DimText>
      <DimText x={706.5} y={266.800} w={34}>R1.5000</DimText>
      <DimText x={347} y={355.200} w={28.500}>2.0000</DimText>
      <DimText x={297.500} y={385.500} w={31}>3.7500</DimText>
      <DimText x={351} y={422.800} w={27.500}>1.0000</DimText>
      <DimText x={495} y={560.800} w={28.500}>7.0000</DimText>

      {/* UCS icon */}
      <g stroke="#b9bec3" strokeWidth="1">
        <path d="M420 470h5.500v5.500H420ZM422.500 472V440M424 472.500H456M423 428.500l4.500 4 4.500-4M427.500 432.500v4M459 464l8 7.500M467 464l-8 7.500" />
      </g>

      {/* cursor crosshair */}
      <path d="M539 285V349.500M506 317H573" stroke="#b4b5b8" />
      <path d="M535.500 313.500h7v7h-7Z" stroke="#b4b5b8" />
      <path d="M568.500 282v1" stroke="#b4b5b8" />

      {/* view cube */}
      <circle cx="781.800" cy="208" r="36" stroke="#434b51" strokeWidth="8" />
      <path d="M765 191h34v34h-34Z" fill="#b5b9bb" />
      <path d="M771 197h22v22h-22Z" fill="#a9adb0" />
      <text x="774.500" y="211.300" textLength="15" lengthAdjust="spacingAndGlyphs" fontSize="9" fontWeight="700" fill="#444b52">TOP</text>
      <g fontSize="13.500" fontWeight="700" fill="#bcc0c3" textAnchor="middle" className="font-['Liberation_Sans',sans-serif]">
        <text x="781.800" y="175.500">N</text>
        <text x="781.800" y="250.500">S</text>
        <text x="744.500" y="213">W</text>
        <text x="819.500" y="213">E</text>
      </g>
      <rect x="766.500" y="266" width="31" height="11.500" rx="2" fill="#93979d" stroke="#a6aaaf" />
      <text x="769" y="274.500" textLength="16" lengthAdjust="spacingAndGlyphs" fontSize="7.500" fill="#e4e6e8">WCS</text>
      <path d="M789.500 270.500h4l-2 2Z" stroke="#b4b8bc" strokeWidth=".7" />

      {/* navigation bar */}
      <rect x="813" y="295" width="22" height="141" rx="1.500" fill="#666b70" />
      <g stroke="#484d52" strokeWidth="1.100">
        <circle cx="824" cy="315" r="7" /><circle cx="824" cy="315" r="3.500" /><path d="M831 315v7h-7" />
        <path d="M818 343c-3-4 0-4 2-2l-1-6c1-2 2 0 3 4v-6c1-1 2 0 2 5l2-5c1 0 1 2 0 6l4-4c1 1-2 5-3 8-1 7-7 7-9 0Z" />
        <path d="M817 355l13 11M829 354l-12 13M817 359v-4h4M825 354h4v4M817 363v4h4" />
        <circle cx="827" cy="364" r="3.500" /><path d="M829 367l3 3" />
        <path d="M824 380v15M817 388c-2 3 16 3 14 0M822 383l2-3 2 3M818 386v5" />
        <path d="M817 407h4v4h-4ZM822 407h4v4h-4ZM827 407h4v4h-4ZM817 413h9v9h-9ZM819 415l4 3-4 2Z" />
        <path d="M828 297h3v3h-3Z" /><circle cx="830" cy="432" r="1.700" />
      </g>
      <path d="M822.500 327.500h3l-1.500 2ZM822.500 374h3l-1.500 2ZM822.500 399h3l-1.500 2Z" fill="#484d52" />
    </svg>
  )
}

function CommandLine() {
  return (
    <div className="absolute bottom-0 left-[121px] flex h-[41px] w-[432px]">
      <div className="flex w-[16px] flex-col items-center bg-[#1d242d] pt-[3px]">
        <svg width="12" height="4" viewBox="0 0 12 4" className="block" aria-hidden="true">
          <path d="M0 1h12M0 3h12" stroke="#a8aeb6" strokeDasharray="1.200 .8" />
        </svg>
        <Icon size={6} className="mt-[3px]"><path d="M1 1l14 14M15 1L1 15" strokeWidth="2.500" /></Icon>
        <Icon size={10} className="mt-[8px]"><path d="M1 15l8-8" strokeWidth="3" /><path d="M14 2l-4 0-2 3 3 3 4-1" strokeWidth="2.200" /></Icon>
      </div>
      <div className="flex flex-1 flex-col font-['DejaVu_Sans_Mono',monospace] text-[7.700px]">
        <div className="flex h-[28px] flex-col border-b border-[#3c4349] bg-[#929999] pl-px pt-[7px] leading-[10px] text-[#1d2327]">
          <Fit w={111.5}>Dimension disassociated.</Fit>
          <Fit w={111.5}>Dimension disassociated.</Fit>
        </div>
        <div className="flex h-[13px] items-center bg-[#b7bab8] pl-[2px]">
          <span className="flex h-[8px] w-[10px] items-end border border-[#50565b] bg-[#92989a] pl-px text-[5px] leading-[6px] text-[#2f353a]">&gt;_</span>
          <Caret className="ml-[3px] text-[#3f464c]" />
          <Fit w={65} className="ml-[5px] italic text-[#595f61]">Type a command</Fit>
          <Caret className="ml-auto mr-[2px] rotate-180 text-[#3f464c]" />
        </div>
      </div>
    </div>
  )
}

/* ------------------------------------------------------------------ */
/* Status bar                                                          */
/* ------------------------------------------------------------------ */

const layoutTabs: [string, number][] = [['Layout1', 28], ['Layout2', 28.5]]

const annotationA = <path d="M8 0L10 7 15 15 8 11 1 15 6 7Z" fill="#e6e9ec" stroke="none" />

// One entry per status toggle: cell classes, whether it is lit, the drawing
const statusTools: { cell: string; on?: boolean; caret?: boolean; icon?: ReactNode }[] = [
  { cell: 'w-[16px]', icon: <path d="M5 1v14M11 1v14M1 5h14M1 11h14" /> },
  { cell: 'w-[16.500px]', icon: <path d="M2 3h12M2 8h12M2 13h12" strokeDasharray="2 3" strokeWidth="2" /> },
  { cell: 'w-[13px]', caret: true },
  { cell: 'w-[15px]', on: true, icon: <><path d="M4 1v6M1 4h6" strokeWidth="1.800" /><path d="M5 9h10v5H5Z" fill="#e7eef6" /></> },
  { cell: 'w-[17.500px]', icon: <path d="M3 1v13h12M3 8h5v6" /> },
  { cell: 'w-[15px]', on: true, icon: <><circle cx="7" cy="9" r="6" /><path d="M7 9h9M7 9l7-8" /></> },
  { cell: 'w-[12px]', caret: true },
  { cell: 'w-[14px]', icon: <path d="M2 2l12 12M10 1v5M6 9v6" stroke="#868e99" /> },
  { cell: 'w-[13px]', caret: true },
  { cell: 'w-[15px]', on: true, icon: <path d="M15 2L2 14h13" strokeWidth="1.800" /> },
  { cell: 'ml-px w-[15px]', on: true, icon: <><path d="M3 3h11v12H3Z" /><path d="M1 1h4v4H1Z" fill="#4f8cc4" /></> },
  { cell: 'w-[12px]', caret: true },
  { cell: 'w-[15px]', icon: <><path d="M1 3h14" strokeWidth="1.500" /><path d="M1 8h5M8 8h7" strokeWidth="2.500" /><path d="M1 13h14" strokeWidth="3" /></> },
  { cell: 'ml-[3px] w-[15px]', on: true, icon: <>{annotationA}<circle cx="13" cy="3" r="2" /></> },
  { cell: 'w-[16.500px]', icon: <>{annotationA}<path d="M13 0l-2 4h3l-2 4" /></> },
  { cell: 'w-[16px]', icon: annotationA },
]

function StatusBar() {
  return (
    <div className="flex h-[22px] shrink-0 items-start border-t border-[#303844] text-[#dfe2e5]">
      <div className="flex h-[12px] items-center pl-[11px]">
        <div className="flex h-[12px] w-[36px] items-center justify-center rounded-b bg-[#3b4453]">
          <Fit w={23} className="font-bold text-white">Model</Fit>
        </div>
        {layoutTabs.map(([name, w]) => (
          <div key={name} className="ml-[2px] flex h-[12px] w-[41px] items-center justify-center rounded-b bg-[#2a323e] text-[#b3b9c2]">
            <Fit w={w}>{name}</Fit>
          </div>
        ))}
        <div className="ml-[3px] flex h-[11px] w-[15px] items-center justify-center rounded bg-[#2a323e]">
          <Icon size={6}><path d="M8 1v14M1 8h14" strokeWidth="2.500" /></Icon>
        </div>
      </div>
      <div className="ml-auto mt-px flex h-[17px] items-center bg-[#2f3744] pr-[4px]">
        <div className="flex h-full w-[100px] items-center border-r border-[#222933] bg-[#353e4b] pl-[13px]"><Fit w={83}>3.3656, 4.4768, 0.0000</Fit></div>
        <div className="flex w-[34.500px] items-center pl-[4px]"><Fit w={27}>MODEL</Fit></div>
        {statusTools.map((tool, i) => (
          <div key={i} className={classNames('flex h-[15px] shrink-0 items-center justify-center', tool.cell, tool.on && 'bg-[#4f81b8]')}>
            {tool.caret ? <Caret /> : <Icon size={11}>{tool.icon}</Icon>}
          </div>
        ))}
        <Fit w={9} className="ml-[3px]">1:1</Fit>
        <Caret className="ml-[2px]" />
        <span className="ml-[4px] h-[14px] w-px bg-[#222933]" />
        <Icon size={11} className="ml-[3px]"><circle cx="8" cy="8" r="4" strokeWidth="3" /><path d="M8 0v4M8 12v4M0 8h4M12 8h4M2.500 2.500l3 3M10.500 10.500l3 3M13.500 2.500l-3 3M5.500 10.500l-3 3" strokeWidth="2" /></Icon>
        <Caret className="ml-[6px]" />
        <Icon size={11} className="ml-[6px]"><path d="M8 0v16M0 8h16" strokeWidth="2" /></Icon>
        <span className="ml-[5px] h-[14px] w-px bg-[#222933]" />
        <Icon size={11} className="ml-[3px]"><path d="M1 1h6v6H1ZM5 14l3-5 3 5Z" /><circle cx="13" cy="7" r="2.500" /></Icon>
        <Icon size={12} className="ml-[6px]"><path d="M1 3h14v10H1ZM9 5h4v3M7 11H3V8" /></Icon>
        <Icon size={12} className="ml-[4px]"><path d="M0 3h16M0 8h16M0 13h16" strokeWidth="2" stroke="#e9ebee" /></Icon>
      </div>
    </div>
  )
}

function CadWindow() {
  return (
    <div className="flex w-[832px] shrink-0 flex-col border border-[#226685] bg-[#222933] font-['Open_Sans','Noto_Sans',sans-serif] text-[8.500px] [font-stretch:90%]">
      <TitleBar />
      <MenuBar />
      <RibbonTabs />
      <Ribbon />
      <DocumentTabs />
      <SnapToolbar />
      <div className="flex h-[511px] shrink-0">
        <PropertiesPalette />
        <div className="relative w-[676px] overflow-hidden bg-[#22292f]">
          <ModelSpace />
          <CommandLine />
        </div>
      </div>
      <StatusBar />
    </div>
  )
}

/* ------------------------------------------------------------------ */
/* PDF reader                                                          */
/* ------------------------------------------------------------------ */

const pdfTabs: { name: string; w: number; cell: string }[] = [
  { name: 'Geometry-Unf...', w: 65, cell: 'w-[101px]' },
  { name: "Smith's Box.pdf", w: 62.5, cell: 'w-[100px]' },
  { name: 'AutoCAD-Ch ...', w: 62.5, cell: 'w-[101px]' },
]

function PdfChrome() {
  return (
    <div className="shrink-0 font-['Open_Sans','Noto_Sans',sans-serif] [font-stretch:90%]">
      <div className="flex h-[20px] items-center bg-white text-[8.500px] text-[#9b9b9b]">
        <Fit w={155}>ercises.pdf - Adobe Acrobat Pro DC (32-bit)</Fit>
      </div>
      <div className="flex h-[13px] items-center bg-[#f8f8f8] text-[10px] leading-none text-[#4f4f4f]">
        <Fit w={28.5} className="ml-[7.500px]">E-Sign</Fit>
        <Fit w={37} className="ml-[9.500px]">Window</Fit>
        <Fit w={21} className="ml-[9.500px]">Help</Fit>
      </div>
      <div className="flex h-[25px] border-y border-[#cdcdcd] bg-[#ebebeb] text-[9.500px] text-[#4a4a4a]">
        <div className="flex w-[22px] items-center border-r border-[#cdcdcd]">s</div>
        {pdfTabs.map((tab) => (
          <div key={tab.name} className={classNames('flex items-center justify-center border-r border-[#cdcdcd]', tab.cell)}>
            <Fit w={tab.w}>{tab.name}</Fit>
          </div>
        ))}
        <div className="-mb-px flex w-[100px] items-center bg-white pl-[18.500px]">
          <Fit w={62}>AutoCAD Ch-...</Fit>
          <Icon size={6} className="ml-[7.500px]"><path d="M2 2l12 12M14 2L2 14" stroke="#444" strokeWidth="3" /></Icon>
        </div>
        <div className="flex flex-1 items-center overflow-hidden border-l border-[#cdcdcd] pl-[11px]">
          <Icon size={13}><path d="M1 2h14v10H9l-3 4v-4H1Z" stroke="#555" /></Icon>
        </div>
      </div>
      <div className="flex h-[31px] items-center bg-[#fafafa] text-[9px] text-[#4b4b4b]">
        <span className="h-[7px] w-[2px] bg-[#57708a]" />
        <Icon size={15} className="ml-[16px]"><path d="M.5 3h15v11H.5ZM.5 3L8 9l7.500-6M.5 14L6 8M15.500 14L10 8" stroke="#5a5a5a" /></Icon>
        <Icon size={16} className="ml-[14px]"><circle cx="6.500" cy="6.500" r="5.500" stroke="#5a5a5a" strokeWidth="1.600" /><path d="M10.500 10.500L15 15" stroke="#5a5a5a" strokeWidth="2.200" /><path d="M4 6.500h5.500" stroke="#5a5a5a" strokeDasharray="1.200 1" /></Icon>
        <Icon size={15} className="ml-[47px]"><circle cx="8" cy="8" r="7" stroke="#9b9b9b" /><path d="M8 12V4.500M5 7.500l3-3 3 3" stroke="#9b9b9b" strokeWidth="1.500" /></Icon>
        <Icon size={15} className="ml-[14px]"><circle cx="8" cy="8" r="7" stroke="#555" strokeWidth="1.500" /><path d="M8 4v7.500M5 8.500l3 3 3-3" stroke="#555" strokeWidth="1.700" /></Icon>
        <span className="ml-[14px] mt-[3px] flex h-[17px] w-[20px] justify-center border-b border-[#d5d5d5] leading-[13px]">1</span>
        <Fit w={12} className="ml-[3px]">/ 5</Fit>
        <span className="ml-[13px] h-[18px] w-px bg-[#d8d8d8]" />
        <Icon size={15} className="ml-[13px]"><path d="M1 2h14v10H9l-2 3v-3H1Z" stroke="#5a5a5a" fill="#d9d9d9" /><path d="M4 5.500h8M4 8.500h8" stroke="#5a5a5a" /></Icon>
        <Icon size={15} className="ml-[14px]"><path d="M12.500 1l2.500 2.500-7 8-4-2.500ZM4 9l-2 5 6-2.500" stroke="#5a5a5a" fill="#c9c9c9" /><path d="M7 15h9" stroke="#c4c4c4" strokeWidth="2" /></Icon>
        <Icon size={15} className="ml-[14px]"><path d="M2 14l2-8 6-3 2 6-3 5ZM2 14l5-6M9 2l2-1 3 6-2 1M9 14c2-3 3 1 7-1" stroke="#555" /></Icon>
        <Icon size={16} className="ml-[14px]"><path d="M5 6V1h6l3 3v2M5 9v6h3" stroke="#555" strokeWidth="1.500" /><path d="M0 4h8v4H0Z" fill="#666" stroke="none" /><path d="M9 14l1-3 5-4 1 2-5 5Z" stroke="#555" /></Icon>
      </div>
    </div>
  )
}

function ExerciseFigure() {
  return (
    <svg viewBox="840 222 440 284" width="440" height="284" fill="none" className="block shrink-0 text-[#3d4446]" aria-label="Exercise drawing">
      <path d="M845 499.500H1262.500V229.500h4V503.500H845Z" fill="#8b9899" />
      <path d="M838 225H1262V498.700H838Z" fill="#fbfefe" stroke="#596366" strokeWidth="1.200" />
      <path d="M1035 226v116h226" stroke="#f2f9fb" strokeWidth="3" />

      <g stroke="#50585a" strokeWidth=".9">
        <path d="M918.500 242V315M918.500 384V486M1158.500 242V313M919 248.300H1027M1049 248.300H1158" />
        <path d="M855 316.700H915M884 380.500H915M855 460.500H973M861.300 318V383M861.300 394V460M890.300 318V343M890.300 355V380" />
        <path d="M913 411.500H950M919 479.500H1020M1041 479.500H1142M1142.500 464V485" />
        <path d="M1195 284L1218 261.500H1225M1103 311L1087 287.500H1081M991.500 297.500H986.500V316M986.500 334V345" />
        <path d="M949 382.500L969 363H975M956 450L988 427H994M1131 440L1121 426.500H1116" />
        <path d="M1155 316.700h7M1158.500 313.500v7M940 388.500h6M943 385.500v6" />
      </g>
      <Arrow x={918.5} y={248.3} dir="left" />
      <Arrow x={1158.5} y={248.3} dir="right" />
      <Arrow x={861.3} y={317} dir="up" />
      <Arrow x={861.3} y={460} dir="down" />
      <Arrow x={890.3} y={317} dir="up" />
      <Arrow x={890.3} y={380.5} dir="down" />
      <Arrow x={918.5} y={411.5} dir="left" />
      <Arrow x={950} y={411.5} dir="right" />
      <Arrow x={918.5} y={479.5} dir="left" />
      <Arrow x={1142.5} y={479.5} dir="right" />
      <Arrow x={986.5} y={316.5} dir="down" size={5} />
      <Arrow x={986.5} y={333.5} dir="up" size={5} />
      <Arrow x={1194} y={285} angle={136} />
      <Arrow x={1103.500} y={312} angle={56} />
      <Arrow x={948.500} y={383} angle={136} size={5} />
      <Arrow x={955} y={450.500} angle={144} size={5} />
      <Arrow x={1132} y={441} angle={54} size={5} />

      {/* outer profile, then the 0.50 inside offset */}
      <g stroke="#2b3133" strokeWidth="1.500">
        <path d="M918.500 316.700H1085.100A32 32 0 0 0 1114.500 297.500A48 48 0 1 1 1201.800 337.500L1142.500 460.500H974.300A24 24 0 0 1 950.500 436.800V388.700A8 8 0 0 0 942.300 380.500H918.500Z" />
        <path d="M934.500 333.200H1085.100A48 48 0 0 0 1129.100 303.900A32 32 0 1 1 1187.400 330.600L1136.900 435.700A16 16 0 0 1 1122.500 444.300H974.300A8 8 0 0 1 966.500 436.800V388.700A24 24 0 0 0 942.300 364.500H934.500Z" />
      </g>

      <g className="text-[#636b6d]">
        <DimText x={1030} y={251.500} w={18}>7.50</DimText>
        <DimText x={1227} y={264.200} w={23}>R1.50</DimText>
        <DimText x={1058} y={290.700} w={21.500}>R1.00</DimText>
        <DimText x={993.5} y={300.700} w={38.500}>.50 TYP.</DimText>
        <DimText x={882} y={352.200} w={17.500}>2.00</DimText>
        <DimText x={977.5} y={366.200} w={19}>R.25</DimText>
        <DimText x={852.5} y={391.700} w={18}>4.50</DimText>
        <DimText x={895} y={414.700} w={16}>1.00</DimText>
        <DimText x={995.5} y={429.700} w={19}>R.75</DimText>
        <DimText x={1095} y={429.700} w={18.5}>R.50</DimText>
        <DimText x={1022} y={482.700} w={17.500}>7.00</DimText>
      </g>
    </svg>
  )
}

function PdfPage() {
  return (
    <div className="flex flex-1 flex-col overflow-hidden bg-white font-['Liberation_Serif',serif] text-[12.300px] leading-[14.100px] text-[#2f3b3c]">
      <div className="-mt-[10px]">
        <Fit w={436} className="h-[14px]">undamentals remains the most important part of using a CAD system. The application o</Fit>
        <Fit w={401}>e basic geometric construction techniques is one of the main tasks in using a CAD</Fit>
        <Fit w={23}>stem.</Fit>
        <Fit w={366} className="mt-[14px]">the following sections, we will continue to examine more of the geometric</Fit>
        <Fit w={409}>nstruction and editing tools provided by <b>AutoCAD 2020</b>. We will be looking at the</Fit>
        <Fit w={426}>
          ometric construction tools, such as <span className="font-['Liberation_Sans',sans-serif]">Trim</span>,{' '}
          <span className="font-['Liberation_Sans',sans-serif]">Extend</span>,{' '}
          <span className="font-['Liberation_Sans',sans-serif]">Edit Polyline</span> and{' '}
          <span className="font-['Liberation_Sans',sans-serif]">Offset</span>, which are
        </Fit>
        <Fit w={130}>ailable in <b>AutoCAD 2020</b>.</Fit>
      </div>
      <div className="mt-[12px]"><ExerciseFigure /></div>
      <div className="h-[106px] shrink-0 bg-[linear-gradient(#f4fcfb,#ffffff_60px)] pl-[5px] pt-[4px]">
        <Fit w={406.5}>Before continuing to the next page, on your own make a rough sketch showing the</Fit>
        <Fit w={400}>steps that can be used to create the design. Be aware that there are many different</Fit>
        <Fit w={215.5}>approaches to accomplishing the same task.</Fit>
      </div>
      <div className="h-[5px] shrink-0 bg-[#979797]" />
      <div className="flex shrink-0 pl-[2px] pt-[22px] text-[11px] text-[#4c5556]">
        <Fit w={18}>3-44</Fit>
        <Fit w={179} className="ml-[26px]">AutoCAD 2020 Tutorial: 2D Fundamentals</Fit>
      </div>
    </div>
  )
}

function DesktopFolders() {
  return (
    <div className="flex h-[18px] shrink-0 items-end pl-[236px]">
      {[0, 1, 2].map((i) => (
        <svg key={i} width="28" height="9" viewBox="0 0 28 9" className="mr-[22.500px]" aria-hidden="true">
          <path d="M0 0h9l3 3H0Z" fill="#d79a2b" />
          <path d="M0 9V3h12l1-1h15v7Z" fill="#f3cf73" />
        </svg>
      ))}
    </div>
  )
}

/* ------------------------------------------------------------------ */
/* Taskbar                                                             */
/* ------------------------------------------------------------------ */

const taskbarApps: { name: string; running?: boolean; active?: boolean; icon: ReactNode }[] = [
  { name: 'Start', icon: <path d="M0 0h7.600v7.600H0ZM8.400 0H16v7.600H8.400ZM0 8.400h7.600V16H0ZM8.400 8.400H16V16H8.400Z" fill="#4cc2f5" /> },
  { name: 'Search', icon: <><circle cx="9" cy="6.500" r="5.500" stroke="#e8e8e8" strokeWidth="1.800" fill="#4a4a4a" /><path d="M5 10.500L1 15" stroke="#e8e8e8" strokeWidth="2" /></> },
  { name: 'Task view', icon: <><path d="M0 4h11v11H0Z" fill="#6e6e6e" /><path d="M4 1h12v10H4Z" fill="#e6e6e6" /></> },
  { name: 'Widgets', icon: <><path d="M0 1h7v14H0Z" fill="#f2f6fa" /><path d="M0 1h7v14H0Z" stroke="#4aaee8" /><path d="M8 1h8v7H8Z" fill="#3b9be4" /><path d="M8 8.500h8V15H8Z" fill="#8fd0f5" /></> },
  { name: 'Chat', icon: <><circle cx="8" cy="8" r="7.500" fill="#6b68c4" /><path d="M1 16l1-6 5 5Z" fill="#6b68c4" /><path d="M4 5.500h6v5H4ZM10.500 7.500L13 5.500v5l-2.500-2Z" fill="#f3f3f8" /></> },
  { name: 'Explorer', running: true, icon: <><path d="M0 1h6l2 2h8v12H0Z" fill="#f3c44c" /><path d="M0 6h16v9H0Z" fill="#fbdc74" /><path d="M3 10h10v5H3Z" fill="#3b86c6" /></> },
  { name: 'Autodesk', icon: <><path d="M0 15L6 1h4L5 15Z" fill="#3a7fb5" /><path d="M6 1h4l6 14h-6Z" fill="#46a36f" /><path d="M4 15l7-6 5 6Z" fill="#6cc5b7" /><path d="M6 11l2-5 2 4Z" fill="#202020" /></> },
  { name: 'Photos', icon: <><path d="M0 1h16v14H0Z" fill="#3e8fdc" /><path d="M0 15l6-8 8 8Z" fill="#163a66" /><path d="M8 9l3-3 5 5v4h-3Z" fill="#a7d3f5" /></> },
  { name: 'Amazon', icon: <><rect width="16" height="16" rx="2" fill="#f8f8f8" /><FaAmazon x="2" y="2" width="12" height="12" color="#161616" /></> },
  { name: 'Dropbox', icon: <FaDropbox width="17" height="17" color="#f5f5f5" /> },
  { name: 'Office', icon: <><path d="M3 3l7-3 4 2v12l-4 2-7-3 7 1V3L6 4v7l-3 1Z" fill="#e4502b" /><path d="M10 1l4 1v12l-4 2Z" fill="#a92f17" /></> },
  { name: 'Presentation', icon: <><path d="M1 1h14v14H1Z" fill="#d4694a" /><path d="M3 4h10v9H3Z" fill="#f1c7b6" /><path d="M4 10h8M4 7h3M9 6h3" stroke="#b44626" /></> },
  { name: 'Player', icon: <><path d="M0 1h16v14H0Z" fill="#9aa3a5" /><path d="M3 2l12 6-12 6Z" fill="#2f93c6" stroke="#e4f0f5" /></> },
  { name: 'Browser', running: true, icon: <><circle cx="8" cy="8" r="7.500" fill="#f1c232" /><path d="M8 8L1.500 4.200A7.500 7.500 0 0 1 14.500 4.200Z" fill="#dc4a3c" /><path d="M8 8L1.500 4.200A7.500 7.500 0 0 0 7.500 15.500L11 9.500Z" fill="#46a35a" /><circle cx="8" cy="8" r="3.600" fill="#f4f4f4" /><circle cx="8" cy="8" r="2.700" fill="#4080dd" /></> },
  { name: 'Word', running: true, icon: <><path d="M4 1h12v14H4Z" fill="#3a7bd0" /><path d="M4 5h12v5H4Z" fill="#2a5fb4" /><path d="M0 4h8v8H0Z" fill="#1b4a96" /><text x=".7" y="10.500" fontSize="7" fontWeight="700" fill="#fff">W</text></> },
  { name: 'Reader', running: true, icon: <><rect x="1" y="1" width="14" height="15" rx="2" fill="#b3130c" /><path d="M3 12c4-1 6-5 5-9-2 0 0 6 5 7-2-1-6 0-10 2Z" stroke="#fff" strokeWidth="1.100" /></> },
  { name: 'Sheets', running: true, icon: <><path d="M4 1h12v14H4Z" fill="#2f9a5c" /><path d="M10 1h6v7h-6Z" fill="#49b977" /><path d="M0 4h8v8H0Z" fill="#136c39" /><text x="1.700" y="10.500" fontSize="7" fontWeight="700" fill="#fff">X</text></> },
  { name: 'CAD', running: true, active: true, icon: <><path d="M0 0h16v16H0Z" fill="#f2eceb" /><path d="M6.300 2h3.400L14 14h-3l-.8-2.500H5.800L5 14H2ZM8 5L6.600 9.300h2.800Z" fill="#b3222c" fillRule="evenodd" /></> },
  { name: 'Meeting', running: true, icon: <><rect x=".5" y=".5" width="15" height="15" rx="4" fill="#3f86ea" /><path d="M3 5.500h7v5H3ZM10.500 7.500L13 5.500v5l-2.500-2Z" fill="#fff" /></> },
]

function Taskbar() {
  return (
    <div className="flex h-[32px] shrink-0 items-center bg-[#202020] font-['Open_Sans','Noto_Sans',sans-serif] [font-stretch:90%]">
      <div className="ml-[361.500px] flex">
        {taskbarApps.map((app) => (
          <div key={app.name} className="flex w-[29.350px] justify-center">
            <div className={classNames('flex h-[27px] w-[26px] flex-col items-center rounded-sm pt-[5px]', app.active && 'bg-[#303030]')}>
              <svg width="16" height="16" viewBox="0 0 16 16" fill="none" className="block shrink-0" aria-label={app.name}>{app.icon}</svg>
              {app.running && (
                <span className={classNames('mt-[3px] h-[2px] shrink-0 rounded-full', app.active ? 'w-[10px] bg-[#b9b4d6]' : 'w-[4px] bg-[#9a9a9a]')} />
              )}
            </div>
          </div>
        ))}
      </div>
      <div className="ml-auto flex items-center pr-[10px]">
        <Icon size={9}><path d="M1 12l7-7 7 7" stroke="#e3e3e3" strokeWidth="2" /></Icon>
        <Icon size={11} className="ml-[12px]"><path d="M1 12C-1 7 3 6 4 6c1-5 9-4 9 1 3 0 3 5 0 5Z" fill="#cfcfcf" stroke="none" /><circle cx="12" cy="12" r="4" fill="#d8303a" stroke="none" /><path d="M10.500 10.500l3 3M13.500 10.500l-3 3" stroke="#fff" /></Icon>
        <Icon size={12} className="ml-[9px]"><rect x="5.500" y="1" width="5" height="9" rx="2.500" stroke="#cfcfcf" /><path d="M3 7c0 7 10 7 10 0M8 12v3" stroke="#cfcfcf" /></Icon>
        <Icon size={13} className="ml-[9px]"><path d="M10 2H1v10h12V8M4 15h6M7 12v3" stroke="#dedede" /><path d="M11 1h4v4h-4ZM13 5v4" stroke="#dedede" /></Icon>
        <Icon size={11} className="ml-[4px]"><path d="M1 6h3l4-4v12l-4-4H1ZM10.500 5c2 2 2 4 0 6M13 3c3.500 3 3.500 7 0 10" stroke="#dedede" /></Icon>
        <div className="ml-[10px] flex flex-col items-end text-[8.500px] leading-[10.500px] text-[#ededed]">
          <Fit w={29}>6:30 PM</Fit>
          <Fit w={36}>2/16/2022</Fit>
        </div>
      </div>
    </div>
  )
}

/**
 * Main desktop layout
 */
export default function App() {
  return (
    <div className="flex h-[720px] w-[1280px] flex-col overflow-hidden bg-black">
      <div className="flex h-[688px] shrink-0">
        <div className="w-2 shrink-0 overflow-hidden pl-[5px] pt-[37px] font-['Open_Sans',sans-serif] text-[8px] leading-[12px] text-white">
          F
          <span className="ml-[2px] mt-[335px] block h-[6px] w-px bg-[#a9c6d6]" />
        </div>
        <CadWindow />
        <div className="flex w-[440px] flex-col">
          <DesktopFolders />
          <div className="flex h-[631.500px] shrink-0 flex-col overflow-hidden bg-white">
            <PdfChrome />
            <PdfPage />
          </div>
        </div>
      </div>
      <Taskbar />
    </div>
  )
}
